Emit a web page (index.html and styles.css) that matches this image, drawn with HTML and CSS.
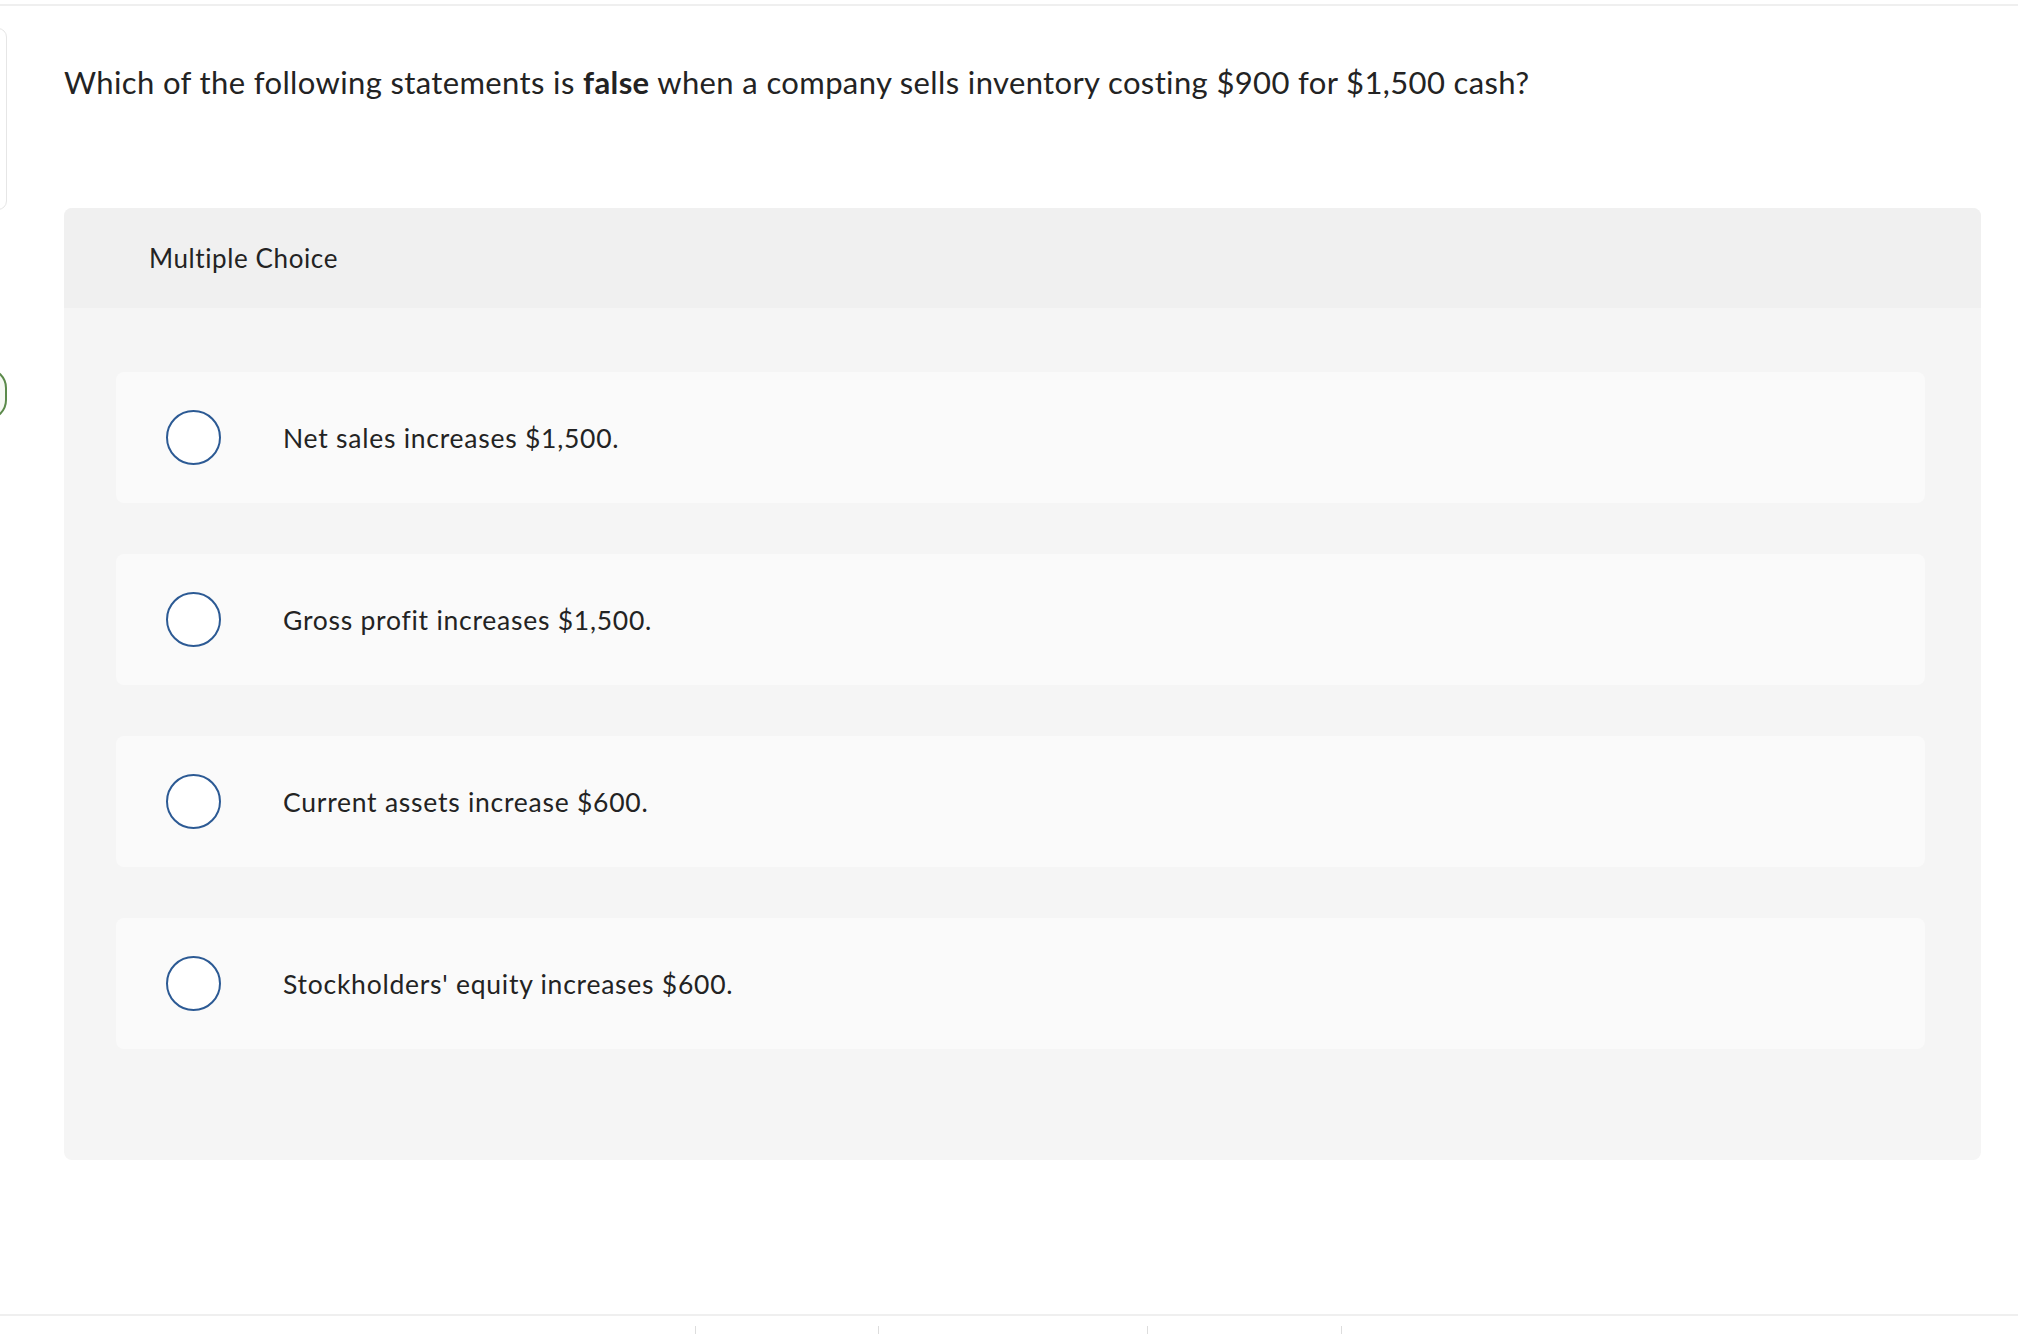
FILE: index.html
```html
<!DOCTYPE html>
<html lang="en">
<head>
<meta charset="utf-8">
<title>Multiple Choice</title>
<link rel="stylesheet" href="styles.css">
</head>
<body>
<div class="page">
  <div class="topbar"></div>
  <div class="main">
    <aside class="side">
      <div class="side-card"></div>
      <div class="side-pill"></div>
    </aside>
    <section class="content">
      <p class="question">Which of the following statements is <strong>false</strong> when a company sells inventory costing $900 for $1,500 cash?</p>
      <div class="panel">
        <div class="panel-head">Multiple Choice</div>
        <div class="panel-body">
          <label class="option"><span class="radio"></span><span class="option-text">Net sales increases $1,500.</span></label>
          <label class="option"><span class="radio"></span><span class="option-text">Gross profit increases $1,500.</span></label>
          <label class="option"><span class="radio"></span><span class="option-text">Current assets increase $600.</span></label>
          <label class="option"><span class="radio"></span><span class="option-text">Stockholders' equity increases $600.</span></label>
        </div>
      </div>
    </section>
  </div>
  <footer class="footer">
    <span class="tick tick-1"></span>
    <span class="tick tick-2"></span>
    <span class="tick tick-3"></span>
    <span class="tick tick-4"></span>
  </footer>
</div>
</body>
</html>
```
FILE: styles.css
```css
html, body {
  margin: 0;
  padding: 0;
  background: #ffffff;
}
body {
  font-family: Lato, "Liberation Sans", sans-serif;
  color: #232323;
}
.page {
  height: 1334px;
  display: flex;
  flex-direction: column;
  overflow: hidden;
}
.topbar {
  height: 4px;
  border-bottom: 2px solid #efefef;
  flex: none;
}
.main {
  display: flex;
  flex: none;
}
.side {
  width: 8px;
  overflow: hidden;
  flex: none;
  padding-top: 22px;
}
.side-card {
  width: 107px;
  margin-left: -100px;
  height: 182px;
  border: 1.5px solid #e6e6e6;
  border-radius: 9px;
  box-sizing: border-box;
}
.side-pill {
  width: 60px;
  margin-left: -53px;
  margin-top: 158px;
  height: 52px;
  border: 2px solid #5b8a4b;
  background: #f5f8f3;
  border-radius: 20px;
  box-sizing: border-box;
}
.content {
  flex: 1;
  padding: 0 37px 0 56px;
}
.question {
  margin: 56px 0 0 0;
  font-size: 31px;
  line-height: 40px;
  font-weight: 400;
  letter-spacing: 0.37px;
}
.question strong {
  font-weight: 700;
}
.panel {
  margin-top: 106px;
  border-radius: 8px;
  overflow: hidden;
  background: #f5f5f5;
}
.panel-head {
  height: 100px;
  line-height: 100px;
  background: #f0f0f0;
  padding-left: 85px;
  font-size: 26px;
  letter-spacing: 0.6px;
}
.panel-body {
  padding: 64px 56px 111px 52px;
  display: flex;
  flex-direction: column;
  gap: 51px;
}
.option {
  height: 131px;
  background: #fafafa;
  border-radius: 8px;
  display: flex;
  align-items: center;
  padding-left: 50px;
}
.radio {
  width: 55px;
  height: 55px;
  box-sizing: border-box;
  border: 2.5px solid #2c5a94;
  border-radius: 50%;
  background: #ffffff;
  flex: none;
}
.option-text {
  margin-left: 62px;
  font-size: 26.5px;
  letter-spacing: 0.75px;
}
.footer {
  margin-top: auto;
  margin-bottom: -10px;
  border-top: 2px solid #efefef;
  height: 30px;
  flex: none;
  display: flex;
  padding-top: 10px;
  box-sizing: border-box;
}
.tick {
  width: 1px;
  height: 20px;
  background: #dddddd;
}
.tick-1 { margin-left: 695px; }
.tick-2 { margin-left: 182px; }
.tick-3 { margin-left: 268px; }
.tick-4 { margin-left: 193px; }
```
